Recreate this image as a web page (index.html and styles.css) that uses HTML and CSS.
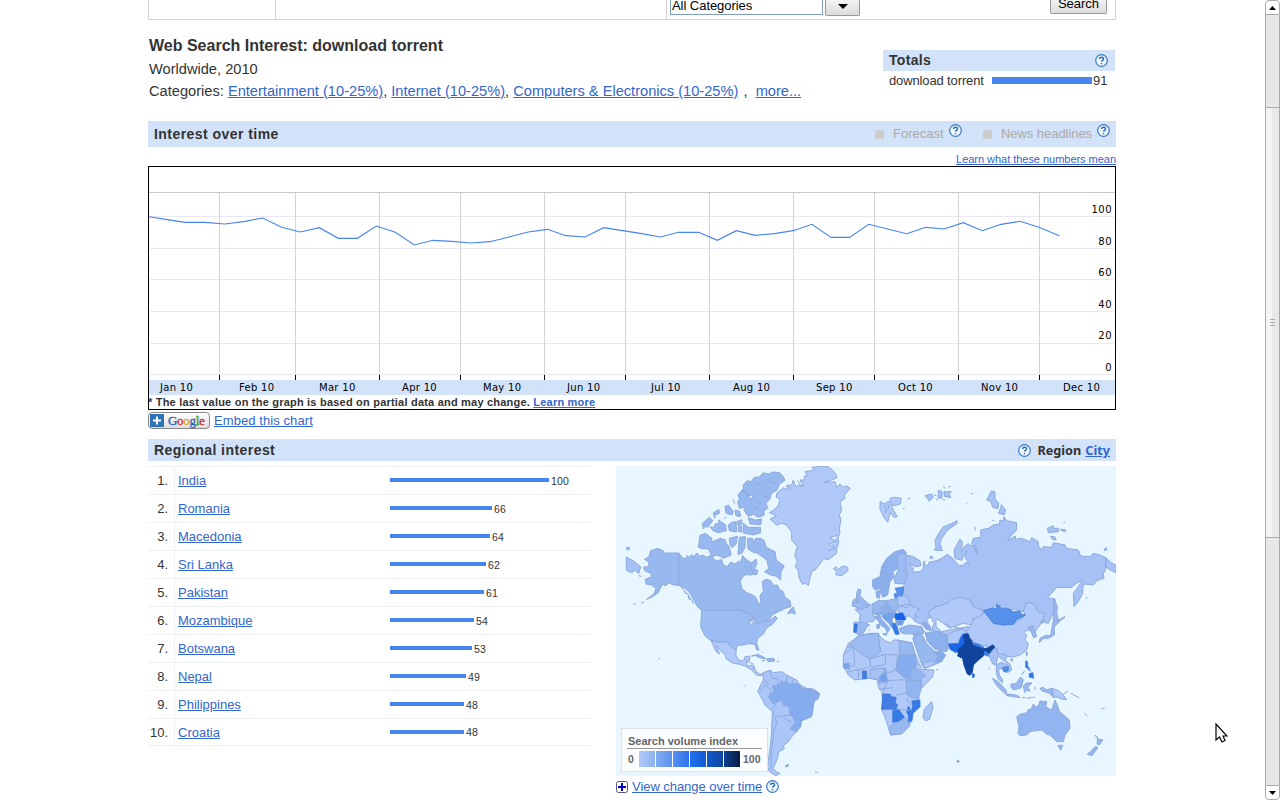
FILE: index.html
```html
<!DOCTYPE html>
<html lang="en">
<head>
<meta charset="utf-8">
<title>Web Search Interest: download torrent</title>
<link rel="stylesheet" href="styles.css">
</head>
<body>
<svg width="0" height="0" class="defs">
  <symbol id="help" viewBox="0 0 13 13"><circle cx="6.5" cy="6.5" r="5.8" fill="#f0f8ff" stroke="#3679c3" stroke-width="1.2"/><path d="M4.6 5.1c0-2.5 4-2.4 3.9-.1C8.500 6.300 6.500 6.300 6.500 7.800M6.500 8.900v1.300" fill="none" stroke="#2a6dbb" stroke-width="1.500"/></symbol>
</svg>
<div class="window">
<main class="content">
  <div class="filters">
    <div class="f1"></div><div class="f2"></div>
    <div class="f3"><span class="combo">All Categories</span><span class="btn drop"><svg width="10" height="5"><path d="M0 0h10L5 5z"/></svg></span><span class="btn search">Search</span></div>
  </div>
  <header class="head">
    <div class="summary">
      <h1>Web Search Interest: download torrent</h1>
      <p class="where">Worldwide, 2010</p>
      <p class="cats"><span>Categories:</span> <a class="c1">Entertainment (10-25%)</a>, <a class="c2">Internet (10-25%)</a>, <a class="c3">Computers &amp; Electronics (10-25%)</a> <span class="comma">,</span> <a class="c4">more...</a></p>
    </div>
    <div class="totals">
      <div class="bar"><h2>Totals</h2><svg class="q"><use href="#help"/></svg></div>
      <div class="total"><span class="term">download torrent</span><i></i><b>91</b></div>
    </div>
  </header>
  <div class="bar time"><h2>Interest over time</h2>
    <span class="check"></span><span class="opt forecast">Forecast</span><svg class="q up"><use href="#help"/></svg>
    <span class="check second"></span><span class="opt news">News headlines</span><svg class="q up"><use href="#help"/></svg>
  </div>
  <div class="learn"><a>Learn what these numbers mean</a></div>
  <section class="chart">
    <svg width="966" height="228" viewBox="149 167 966 228">
      <path d="M149 380h966v15h-966z" fill="#d1e2f9"/>
      <path d="M150 216.500h964M150 248.500h964M150 279.500h964M150 311.500h964M150 343.500h964M150 374.500h964" stroke="#e8e8f4"/>
      <path d="M219.500 193v183M295.500 193v183M379.500 193v183M460.500 193v183M544.500 193v183M625.500 193v183M709.500 193v183M793.500 193v183M874.500 193v183M958.500 193v183M1039.500 193v183" stroke="#d3d7d3"/>
      <path d="M149 192.500h966" stroke="#c8c8c8"/>
      <path d="M219.500 375v5M295.500 375v5M379.500 375v5M460.500 375v5M544.500 375v5M625.500 375v5M709.500 375v5M793.500 375v5M874.500 375v5M958.500 375v5M1039.500 375v5" stroke="#000"/>
      <polyline transform="translate(140 160) scale(.33333)" fill="none" stroke="#4684ee" stroke-width="3.300" points="25,170 82,179 135,187 195,187 255,192 315,184 368,174 425,202 481,216 538,203 595,235 652,235 709,198 766,217 823,255 879,241 935,244 992,249 1050,245 1107,231 1165,216 1222,208 1278,227 1335,231 1391,203 1448,212 1505,221 1561,231 1615,217 1676,217 1732,241 1789,212 1846,226 1903,221 1960,212 2016,193 2073,232 2129,232 2186,193 2243,207 2300,221 2357,202 2413,207 2470,188 2527,212 2583,193 2640,184 2697,202 2758,227"/>
      <g class="axis">
        <text x="160" y="391">Jan 10</text><text x="239" y="391">Feb 10</text><text x="319" y="391">Mar 10</text><text x="402" y="391">Apr 10</text><text x="483" y="391">May 10</text><text x="567" y="391">Jun 10</text><text x="651" y="391">Jul 10</text><text x="733" y="391">Aug 10</text><text x="816" y="391">Sep 10</text><text x="898" y="391">Oct 10</text><text x="981" y="391">Nov 10</text><text x="1063" y="391">Dec 10</text>
      </g>
      <g class="axis scale">
        <text x="1112" y="213">100</text><text x="1112" y="245">80</text><text x="1112" y="276">60</text><text x="1112" y="308">40</text><text x="1112" y="339">20</text><text x="1112" y="371">0</text>
      </g>
    </svg>
    <p>* The last value on the graph is based on partial data and may change. <a>Learn more</a></p>
  </section>
  <div class="embed">
    <span class="gadget"><svg width="14" height="13" viewBox="0 0 14 13"><path d="M0 0h14v13H0z" fill="#3073b3"/><path d="M7 2.500v8M3 6.500h8" stroke="#fff" stroke-width="2"/></svg><span class="google"><i class="g1">G</i><i class="g2">o</i><i class="g3">o</i><i class="g1">g</i><i class="g4">l</i><i class="g2">e</i></span></span>
    <a>Embed this chart</a>
  </div>
  <div class="bar region"><h2>Regional interest</h2><svg class="q"><use href="#help"/></svg><b>Region</b><a>City</a></div>
  <div class="cols">
    <ol class="list">
      <li><span class="n">1.</span><span class="name"><a>India</a></span><i style="width:159px"></i><em>100</em></li>
      <li><span class="n">2.</span><span class="name"><a>Romania</a></span><i style="width:102px"></i><em>66</em></li>
      <li><span class="n">3.</span><span class="name"><a>Macedonia</a></span><i style="width:100px"></i><em>64</em></li>
      <li><span class="n">4.</span><span class="name"><a>Sri Lanka</a></span><i style="width:96px"></i><em>62</em></li>
      <li><span class="n">5.</span><span class="name"><a>Pakistan</a></span><i style="width:94px"></i><em>61</em></li>
      <li><span class="n">6.</span><span class="name"><a>Mozambique</a></span><i style="width:84px"></i><em>54</em></li>
      <li><span class="n">7.</span><span class="name"><a>Botswana</a></span><i style="width:82px"></i><em>53</em></li>
      <li><span class="n">8.</span><span class="name"><a>Nepal</a></span><i style="width:76px"></i><em>49</em></li>
      <li><span class="n">9.</span><span class="name"><a>Philippines</a></span><i style="width:74px"></i><em>48</em></li>
      <li><span class="n">10.</span><span class="name"><a>Croatia</a></span><i style="width:74px"></i><em>48</em></li>
    </ol>
    <div class="right">
      <div class="map">
      <svg width="500" height="310" viewBox="18 18 1500 930" class="land">
        <!-- North America -->
        <g fill="#98b8f0">
          <path d="M206 279L218 293 226 297 232 286 237 293 245 284 250 290 262 279 268 289 280 285 288 292 302 287 318 302 335 299 340 315 352 320 362 306 375 312 387 303 392 308 398 287 412 301 425 308 438 297 441 311 434 325 426 345 408 344 398 350 391 365 395 385 410 398 428 405 438 412 445 433 452 425 450 405 460 395 457 365 468 358 482 362 490 376 502 375 508 388 520 395 524 410 540 422 543 440 515 448 490 462 475 480 470 485 445 490 430 470 415 460 390 451 275 451 262 440 252 422 240 400 225 385 206 376z"/>
          <path d="M212 376l8 14M222 390l4 10 8 2M234 402l2 14 9 4M246 420l4 12M405 318l12 14M420 312l6 18M494 462l12-10 14-2M462 490l24-14"/>
          <path d="M400 75L412 62 423 65 433 52 448 51 460 38 475 42 490 36 508 38 518 47 525 61 508 73 501 91 485 99 479 118 468 130 473 145 462 152 462 166 445 172 430 163 415 169 402 152 407 142 388 145 383 125 388 118 384 105 398 88 411 99 423 119 430 104 414 107 400 95z"/>
          <path d="M436 70l14 6M470 60l16 10 14-2M440 120l14 12M460 108l14 2M430 140l14 8"/>
          <path d="M415 173l22 7 18-3 -3 17-32-2zM400 190l15 12 36 0 1 16-22 7-30-6zM345 140l10-5 15 20-4 10-18-5zM375 150l14 4 3 15-14-1zM355 195l9-8 14-2 2 31-22-4zM277 190l21-18 11 10-17 20-8-3-4 8zM300 200l10 3 8-14 8 5 0-14 21 15 2 17-24 6-16-6zM310 158l17-9 1 11-13 5-1 10zM380 185l15-6 1 14-11 4zM385 200l10-2 1 18-10-1zM370 118l4 13M350 170l-8 8"/>
          <path d="M265 262l5-36 16-6 20 15-4 12 12-5 18-7 14 5 3 11 9 9 5 25-22 10-20-10-15 5-10-22-11-2-9 0zM358 235l24-6-3 22-12 12-7-9zM388 232l18-2-1 32-9 17-12 5 2-30z"/>
          <path d="M412 235l15 0 4 15 5-15 15 0 11 6 7 21 26 13 4 25 24 18-10 17-1 25-14-12-17-3-17-10 12-9-5-25-29-22-10-1-18-11zM432 328l12 3-4 13-14-2zM540 450l10-9 6 22-10-5-13 3z"/>
        </g>
        <path fill="#98b8f0" d="M103 298L117 290 122 272 143 265 160 272 163 279 206 279V376L190 375 178 369 165 378 158 371 145 398 125 412 109 418 132 402 138 385 125 375 108 372 105 358 125 350 122 340 105 333 100 322 118 318 115 305z"/>
        <path fill="#a5c1f5" d="M49 291L72 304 92 320 86 341 75 331 65 338 49 331zM50 262h8v7h-8zM85 347l10 2M93 430l10-4M70 432l8 1"/>
        <path fill="#9cbcf3" d="M275 451H390L415 460 428 468 425 485 418 475 420 494 430 490 429 473 440 475 440 492 458 485 480 482 495 468 502 475 490 490 470 505 466 510 462 520 443 535 440 550 447 570 440 570 435 553 416 551 400 555 382 556 378 572 365 560 352 546 320 546 300 540 285 528 272 500z"/>
        <path fill="#b0c9f8" d="M478 158L490 151 505 137 510 118 499 112 500 100 520 83 532 90 530 76 545 75 550 60 557 79 570 75 580 78 570 60 583 60 583 48 593 49 585 35 615 30 605 22 650 18 665 28 675 38 682 52 670 58 640 68 675 65 680 82 690 72 700 82 710 78 721 85 703 105 704 116 690 125 695 150 688 165 693 180 688 205 690 220 684 231 686 250 680 265 680 280 655 299 640 296 635 305 615 330 605 335 600 355 595 376 583 369 578 374 567 353 564 330 556 320 562 305 554 285 562 260 545 240 545 217 530 195 515 190 500 195 480 177 500 168zM683 226l-25 8 22 9-24 9 20 11-22 10M574 82l-11-21M534 78l13 12"/>
        <path fill="#b0c9f8" d="M670 326l8-6 8 8 9-9 15 0 5 12-20 16-18-3 3-10z"/>
        <g transform="translate(0 480)">
          <path fill="#b0c9f8" d="M303 61L320 66H352L365 82 378 90 378 108 388 122 403 120 405 110 420 108 418 122 410 128 412 138 430 135 437 153 450 163 460 160 458 167 440 166 425 150 405 138 390 133 370 130 350 118 345 105 325 85 317 75 329 102 318 95zM408 122l22 10M427 147l8-8"/>
          <path fill="#98b8f0" d="M425 108l18-5 18 8 8 6-17-3-15-7zM472 116l20-1 2 8-20 2zM455 122h10M500 124h7M455 94l5 5M145 118l5-4M403 196v3"/>
          <path fill="#aac5f7" d="M460 158L480 150 490 158 515 155 530 165 560 180 568 193 590 205 610 207 628 220 625 235 612 245 608 275 603 290 575 302 572 320 560 335 550 345 545 350 535 365 520 378 523 387 509 393 505 400 503 415 495 432 490 445 498 455 510 460 498 467 478 455 472 440 478 400 484 350 487 275 465 255 450 225 443 215 452 195 460 180z"/>
          <path fill="#84acee" d="M490 205L486 198 510 193 512 182 522 188 530 180 534 192 560 190 568 193 575 205 600 207 628 220 625 235 612 245 605 290 575 302 570 320 557 335 540 327 555 308 548 290 540 285 537 260 520 255 515 240 490 252 475 232 480 220 492 215z"/>
          <path fill="none" d="M480 152l5 22 18 3 0 15M460 175l15 20M530 165v25M550 178l-4 12M450 215l15-20 21 17M487 270l10-18M487 275l8 15 5 20-8 20-9 80 0 38M497 290l43-5M520 292l25 15"/>
          <path d="M527 437l10-3-8 7zM615 454l8 5"/>
        </g>
        <!-- Europe and Asia -->
        <g transform="translate(750 0)">
          <path fill="#a5c1f5" d="M138 285L160 290 180 302 182 318 165 320 145 308 160 325 158 336 180 335 190 325 190 305 200 320 208 306 222 304 240 298 262 283 275 292 298 318 308 315 320 307 328 310 316 295 319 270 310 292 305 301 285 295 282 270 300 237 307 245 305 275 313 260 325 250 333 258 347 257 353 285 346 270 335 250 340 235 362 232 362 210 385 205 400 195 419 192 420 180 430 183 432 170 440 182 470 188 470 210 455 225 442 243 466 228 467 238 485 235 510 245 515 233 535 245 535 257 545 270 550 260 575 262 580 248 615 255 620 265 655 270 662 288 690 290 700 280 720 285 737 293 737 330 730 340 732 355 710 362 700 375 672 372 668 385 668 400 655 425 642 440 640 400 655 380 668 360 650 370 635 382 590 383 562 413 585 417 585 450 575 470 565 490 545 485 553 460 535 455 520 430 500 428 490 455 470 450 440 445 425 437 410 435 395 445 370 452 340 440 330 420 300 412 280 420 262 430 230 440 205 455 215 470 200 478 207 500 190 495 165 485 150 465 178 450 150 435 140 410 130 400 130 380 142 350 137 310zM737 293l14 13 17 10v22l-12-5-19-12z"/>
          <path fill="#b0c9f8" d="M205 455L230 440 262 430 275 418 300 412 330 420 340 440 370 452 365 470 340 475 335 495 310 490 280 500 270 505 250 490 228 475 228 500 245 515 285 507 325 500 322 525 300 530 265 550 262 525 235 515 215 510 222 490 215 475zM270 500l-15-10M280 500l30 8-15 10 20 2"/>
          <path fill="#b0c9f8" d="M365 465L370 455 385 470 400 490 430 495 460 493 497 465 490 455 500 428 520 430 535 455 553 460 550 478 540 495 525 515 505 510 490 515 500 525 495 540 505 550 500 570 480 585 455 592 440 588 430 585 410 580 400 560 375 558 345 550 325 525 320 515 330 500 340 480z"/>
          <path class="hot" fill="#5590ea" d="M370 452L395 445 410 444 410 433 425 443 450 448 460 455 480 453 485 462 497 465 470 480 460 493 430 495 400 490 385 470z"/>
          <path fill="#a5c1f5" d="M222 270L228 262 225 242 235 222 248 202 285 186 290 181 292 190 263 210 245 235 240 250 247 272zM380 120l14-27 11 3 0 20 11 14-2 16-16-4-6-18zM415 160l7-15 2-11 13 16-4 14zM562 205l17-8 2 8 14 0 0 10-30 3zM600 208l18 2-4 6zM572 230l12 0 5 10-12-2zM732 268l7-5 2 7-8 1zM190 310l7-8M210 290h8v5h-8zM345 200v12M397 181h6M322 130v2M332 101h7M610 187h5"/>
          <path fill="#b0c9f8" d="M60 125L75 132 85 123 93 130 90 115 104 112 124 115 120 132 103 137 93 133 100 150 112 170 102 172 90 158 83 187 72 172 60 148zM72 135l8 12-4 12M84 132l4 16M142 117l9-2M129 146h5"/>
          <path fill="#a5c1f5" d="M195 107l20-5 5 10-12 10zM235 90l12 5-2 20-10-2zM252 95l22 0-6 8 5 10-20-4zM250 78l5 8M265 80h7M228 120l8-4M222 104l8 4M248 118l8 3M205 122l5 2"/>
          <path fill="#8cb0ee" d="M37 360L60 350 65 320 80 295 105 275 130 268 140 280 125 285 110 290 115 325 98 335 103 350 90 365 83 405 68 412 62 385 45 390 38 380zM65 350l15-45 30-18M65 350v45M48 395l15-5-5 25-8-3z"/>
          <path fill="#9cbcf3" d="M110 290L125 280 138 285 135 330 142 350 130 372 105 370 102 355 115 330z"/>
          <path class="hot" fill="#5590ea" d="M105 385l25-4-1 24-8 17-14-2-5-18 10-4z"/>
          <path fill="#b0c9f8" d="M112 410l28-3 12 28-10 8-30-8zM113 440l30-8 35 16-15 17 10 5-15 5-12-8-12 6-18-18z"/>
          <path fill="#98b8f0" d="M37 432l20-11 18 2 37-8 2 25-8 18-30 8-36-4z"/>
          <path fill="#8cb0ee" d="M75 420v22l35 14M45 462l15-8 5-12 20 5 20 13 0 15-35-3-5-12z"/>
          <path fill="#aac5f7" d="M-15 448L3 445 22 430 40 438 37 460 45 475 40 485 25 485 15 495-2 488 0 463z"/>
          <path fill="#98b8f0" d="M-18 486L12 487 29 495 20 502 10 520-5 525-18 515zM-10 400l5-13 8 3-3 17 22 22 3 12-30 8-6-8 8-4-8-13zM-23 425l7-9 9 3-4 22-12-3zM10 375h2"/>
          <path class="hot" fill="#347bea" d="M-17 492h9l-3 25h-8z"/>
          <path fill="#8cb0ee" d="M40 472L58 465 65 478 82 497 90 507 82 518 76 505 62 495 54 480zM50 495l8-4 0 14-7 0zM68 522l13-3-2 8zM26 510h5"/>
          <path fill="#73a2ed" d="M65 468l20-12 20 3 0 20 7 25-18-2-8-13-15-13z"/>
          <path class="hot" fill="#347bea" d="M98 490l10 3 4 10 6 19-11 2-8-18z"/>
          <path class="hot" fill="#1563e8" d="M105 461l23-3 10 19-8 6-25-4z"/>
          <path fill="#73a2ed" d="M108 482h24l-5 13-18 1z"/><path fill="#f8f8cf" stroke="none" d="M98 475h8v13h-8z"/>
          <path fill="#98b8f0" d="M118 505l30-10 38 5 6 20-32 2-30-1-8-5zM185 488l22 9 5 12-16-3zM160 522l25-3 0 20-22 8zM582 415l10 25-2 20 5 20 20-10-18 15-10 0-7 20 0-40zM543 483l10-3-8 12zM680 412v5M605 478l10-8"/>
        </g>
        <g transform="translate(750 480)">
          <path fill="#8cb0ee" d="M195 40L215 35 235 35 262 45 265 85 260 95 225 88 203 65zM190 5l20 12 3 14-14-2z"/>
          <path fill="#98b8f0" d="M158 55L185 42 200 70 220 90 225 100 235 95 257 105 245 125 195 145 188 140 175 105z"/>
          <path fill="#b0c9f8" d="M188 130l30-8 7 10-29 13zM262 45l13-8 33-10 13 10-19 18-14 15-24 2z"/>
          <path fill="#84acee" d="M222 94l15 2 5-6 15 16-17 20-14-2 8-15z"/>
          <path class="hot" fill="#1a65e8" d="M265 72L295 70 302 52 308 42 322 40 328 52 312 78 297 92 300 98 285 97 270 88z"/>
          <path class="hot" fill="#3b80e8" d="M340 68l15 4 17 10-2 7-30-10zM372 90l12 5 2 14-14-5z"/>
          <path fill="#10439b" stroke="#10439b" d="M310 46L325 42 327 54 335 60 338 75 370 87 385 83 398 75 404 80 398 92 390 103 378 92 370 93 371 107 355 120 340 135 337 155 330 166 322 162 312 135 308 115 293 108 297 94 293 90 304 80 315 70z"/>
          <path class="hot" fill="#1563e8" d="M336 158l8 6-2 9-5-1z"/>
          <path fill="#a5c1f5" d="M387 105L400 88 410 84 412 98 420 110 430 100 442 108 436 120 450 133 455 150 443 158 430 154 425 145 415 148 418 165 427 178 428 188 415 178 409 160 409 135 398 132zM413 110l-5 25 15-8 22 10M388 143v6M450 119l8-2-1 7z"/>
          <path class="hot" fill="#5590ea" d="M428 142l17-2 0 12-12 4z"/>
          <path class="hot" fill="#347be8" d="M497 122l6 3 0 12 8 12-14-7zM508 160l11-2 2 17-14-4zM502 148l12 7M485 165l9-13"/>
          <path fill="#98b8f0" d="M397 175L412 183 425 195 440 213 438 222 425 212 410 197zM438 222l18 1 18 4 6 6-40-6zM453 192l15-1 14-20 8 8-7 25-22 6-8-8zM490 198l9-9 17 0-13 11 7 14-10-3-6 7zM486 233l10 0M500 235l24-4M525 200v10M540 205l9-3 12 8 14-6 5 28-12-12-23-8z"/>
          <path fill="#b0c9f8" d="M577 205l18 7 15 13 10 14-15-2-13-6-12 1zM610 222l14-8M633 220l25 14M673 279l9 10M724 268l10-6M498 95l5 3-3 10z"/>
          <path fill="#98b8f0" d="M540 55l18-10 13 3 4-18 3-22 15-8 5 6-15 14 0 25-18 10-14 0-13 13zM505 22l15-5 3 12 7 20-9 5-7-17z"/>
          <path fill="#92b4f0" d="M470 290L480 283 500 278 505 268 513 268 520 252 527 260 535 258 540 243 560 245 557 260 575 270 585 240 592 255 598 274 628 300 630 325 615 345 610 365 590 365 575 350 568 345 560 343 545 330 520 333 510 335 500 345 480 347 474 340 477 320zM594 376l14 0-6 15zM705 345l10 13 14 2-12 15-6-3 2-17zM682 403l26-25 5 6-17 23z"/>
          <!-- Africa -->
          <path fill="#b0c9f8" d="M-5 47L30 40 55 40 60 50 75 62 95 70 100 60 115 60 155 68 165 100 185 148 222 150 218 170 180 210 175 225 180 260 160 280 155 305 140 320 125 340 92 345 78 300 65 268 68 240 65 215 55 200 52 180 30 175 0 178-15 180-35 165-50 140-50 105-35 70-20 60z"/>
          <path fill="#9cbcf3" d="M-4 47L55 40 57 62 62 95 30 117 8 104-20 82-35 80-15 60z"/>
          <path fill="#98b8f0" d="M117 62l38 8 10 36h-47z"/>
          <path fill="#84acee" d="M118 106h47l6 30-15 20-5 25-22-10-22-22z"/>
          <path fill="#92b4f0" d="M156 140l25 12 15 15-20 15-25-2zM138 182l48 0-4 28-7 28-20-5-15-10z"/>
          <path fill="#a5c1f5" d="M30 148l48-4 3 38-22 10-8-15-21-2z"/>
          <path fill="#73a2ed" d="M72 145l6 12 5 30-25-3 0-14 14-12zM-50 130l18 0 0 18-18-5z"/>
          <path fill="#98b8f0" d="M90 318l22-13 25-13 13 25-25 25-33 3-4-15z"/>
          <path class="hot" fill="#447ee4" d="M7 153l12 0 2 22-13 2zM68 222l22 0 5 8 13 2-2 17 7 5-5 14-43 0z"/>
          <path class="hot" fill="#347be8" d="M98 272l18-4 17 23-17 13-18 3zM145 258l10 15 3-17-3-13 25-3 0 20-22 19-2 22-10 6-1-20-5-10z"/>
          <path fill="none" d="M62 95l-7-35M-50 105l30-25M-20 82l5 55-30 0M30 117l2 20-22 10-32 5-15 5M30 117l45-14 2 30-45 10M75 103l38 2-5 45-28 10M80 182l58-3M108 225l45-8M118 270l37 0M55 208l45-5M-5 150v25M80 182l-10 38M140 235l12 20M165 45l20-18 14 12"/>
          <path fill="#aac5f7" d="M215 245l4 18-10 35-12 5-8-11 4-25z"/>
          <path d="M228 150l7-2M291 420l7 4-5 3z"/>
        </g>
      </svg>
      <div class="legend"><h3>Search volume index</h3><div class="ramp"><b>0</b><i class="r1"></i><i class="r2"></i><i class="r3"></i><i class="r4"></i><i class="r5"></i><i class="r6"></i><b class="max">100</b></div></div>
      </div>
      <div class="view"><svg width="12" height="12"><rect x=".5" y=".5" width="11" height="11" rx="2" fill="#fff" stroke="#555577"/><path d="M6 2v8M2 6h8" stroke="#0000c4" stroke-width="2"/></svg><a>View change over time</a><svg class="q"><use href="#help"/></svg></div>
    </div>
  </div>
</main>
<aside class="scroll"><span class="arrow"><svg width="7" height="4"><path d="M0 4L3.500 0 7 4z"/></svg></span><span class="track"><span class="thumb"><i></i><i></i><i></i></span></span><span class="arrow down"><svg width="7" height="4"><path d="M0 0L3.500 4 7 0z"/></svg></span></aside>
</div>
<svg class="cursor" width="13" height="21" viewBox="0 0 13 21"><path d="M1 1v16l3.500-3 2.500 5 3-1.500-2-4.500h4z" fill="#fff" stroke="#000" stroke-width="1.200"/></svg>
</body>
</html>
```
FILE: styles.css
```css
* { box-sizing: border-box; }
body { margin: 0; height: 800px; overflow: hidden; background: #fff; color: #333; font: 13px/16px "Liberation Sans", Arial, sans-serif; }
h1, h2, h3, p, ol { margin: 0; padding: 0; }
i, em { font-style: normal; }
a { color: #3366cc; text-decoration: underline; text-underline-offset: 1px; }
.defs { position: absolute; }
.window { display: flex; justify-content: space-between; height: 800px; }
.content { width: 968px; margin-left: 148px; }
.filters { display: flex; height: 20px; border: 1px solid #d5d5d5; border-top: 0; }
.f1 { width: 127px; border-right: 1px solid #d5d5d5; }
.f2 { width: 391px; border-right: 1px solid #d5d5d5; }
.f3 { flex: 1; display: flex; align-items: flex-start; padding: 0 8px 0 3px; color: #000; }
.combo { width: 153px; height: 15px; border: 1px solid #7f9db9; border-top: 0; padding-left: 1px; line-height: 11px; letter-spacing: -.05px; }
.btn { background: linear-gradient(#f3f3f3, #dcdcdc); border: 1px solid #999; border-top: 0; border-radius: 0 0 2px 2px; }
.drop { width: 35px; height: 16px; margin-left: 2px; display: flex; justify-content: center; align-items: flex-start; padding-top: 4px; }
.search { width: 57px; height: 14px; margin-left: auto; text-align: center; line-height: 8px; }
.head { display: flex; justify-content: space-between; height: 101px; padding: 0 1px; }
.summary { padding-top: 14px; font-size: 14.630px; line-height: 22px; }
h1 { font-size: 16px; line-height: 24px; }
.where { line-height: 22px; }
.cats { white-space: nowrap; }
.comma { margin: 0 4px 0 1px; }
.totals { width: 232px; padding-top: 30px; }
.bar { display: flex; align-items: center; background: #d1e2f9; padding: 0 6px; }
h2 { font-size: 14px; line-height: 20px; letter-spacing: .45px; }
.q { width: 13px; height: 13px; flex: none; }
.totals .bar { height: 21px; justify-content: space-between; padding-right: 7px; }
.totals h2 { margin-top: -2px; letter-spacing: .3px; }
.total { display: flex; align-items: center; height: 21px; padding-left: 6px; }
.term { width: 103px; letter-spacing: -.13px; margin-top: -1px; }
.total i { width: 100px; height: 7px; background: #4684ee; margin-top: -2px; }
.total b { font-weight: normal; margin-left: 1px; margin-top: -1px; }
.time { height: 26px; }
.time h2 { flex: 1; }
.check { width: 9px; height: 9px; border-radius: 2px; background: #ccc; }
.opt { color: #aaa; }
.forecast { width: 51px; margin: 0 5px 0 9px; }
.second { margin-left: 21px; }
.news { width: 91px; margin: 0 5px 0 9px; white-space: nowrap; letter-spacing: -.05px; }
.up { margin-top: -7px; }
.learn { height: 19px; text-align: right; font-size: 11px; line-height: 25px; letter-spacing: -.03px; }
.chart { height: 244px; border: 1px solid #000; }
.chart svg { display: block; }
.chart p { font-size: 11px; font-weight: bold; line-height: 14px; letter-spacing: .21px; margin-left: -1px; }
.axis { font: 10px "DejaVu Sans", sans-serif; letter-spacing: .3px; fill: #000; }
.scale { text-anchor: end; letter-spacing: .5px; }
.embed { height: 29px; display: flex; align-items: flex-start; padding-top: 2px; letter-spacing: .08px; line-height: 17px; }
.gadget { display: flex; align-items: center; width: 62px; height: 17px; border: 1px solid #888; border-radius: 4px; background: linear-gradient(#fff, #ddd); margin-right: 4px; padding-left: 1px; }
.google { font: 13px/14px "Liberation Serif", serif; letter-spacing: -.3px; margin-left: 4px; -webkit-text-stroke: .3px; }
.g1 { color: #2861bb; } .g2 { color: #d32f2f; } .g3 { color: #d9a51b; } .g4 { color: #239b3a; }
.region { height: 22px; }
.region h2 { flex: 1; }
.region b, .region a { font: bold 12.700px/20px "Noto Sans", sans-serif; margin-left: 6px; }
.region a { margin-left: 4px; }
.cols { display: flex; justify-content: space-between; padding-top: 5px; }
.list { width: 442px; list-style: none; border-top: 1px solid #edf0f7; }
.list li { height: 28px; display: flex; align-items: center; border-bottom: 1px solid #edf0f7; }
.list li:last-child { height: 27px; }
.n { width: 27px; align-self: stretch; text-align: right; padding-right: 6px; border-right: 1px solid #edf0f7; line-height: 27px; }
.name { width: 215px; padding-left: 3px; line-height: 27px; }
.list i { height: 4px; background: #4684ee; margin-top: -1px; }
.list em { font-size: 10.500px; margin-left: 2px; letter-spacing: .1px; }
.right { width: 500px; }
.map { position: relative; height: 310px; background: #e8f6ff; }
.land { display: block; stroke: #8eaadd; stroke-width: 3; stroke-linejoin: round; }
.hot { stroke: #3774d5; stroke-width: 2; }
.legend { position: absolute; left: 5px; top: 262px; width: 147px; height: 44px; background: #fbfdfe; border: 1px solid #dce3e6; padding: 6px 5px 0; color: #666; }
.legend h3 { font-size: 11px; line-height: 13px; height: 14px; border-bottom: 1px solid #999; padding-left: 1px; }
.ramp { display: flex; align-items: center; gap: 1px; padding-top: 2px; font-size: 10.500px; }
.ramp b { width: 11px; padding-left: 1px; }
.ramp i { width: 16px; height: 16px; }
.ramp .max { padding-left: 2px; }
.r1 { background: linear-gradient(90deg, #b0c9f8, #8db3f1); }
.r2 { background: linear-gradient(90deg, #83acef, #5c94ee); }
.r3 { background: linear-gradient(90deg, #5890ef, #2c72ed); }
.r4 { background: linear-gradient(90deg, #2270f0, #135bd2); }
.r5 { background: linear-gradient(90deg, #1159cb, #10459f); }
.r6 { background: linear-gradient(90deg, #103f93, #081c43); }
.view { display: flex; align-items: center; height: 22px; letter-spacing: -.05px; }
.view svg:first-child { margin-top: -1px; }
.view a { margin: 0 4px; }
.view .q { margin-top: -2px; }
.scroll { width: 15px; display: flex; flex-direction: column; }
.arrow { height: 15px; border: 1px solid #aaa; border-radius: 4px 4px 0 0; display: flex; align-items: center; justify-content: center; }
.down { border-radius: 0 0 4px 4px; }
.track { flex: 1; background: #e8e7e6; border: solid #aaa; border-width: 0 1px; padding-top: 92px; }
.thumb { display: flex; flex-direction: column; gap: 2px; align-items: center; justify-content: center; height: 431px; border: solid #aaa; border-width: 1px 0; background: linear-gradient(90deg, #f5f4f3 50%, #e9e8e7 50%); }
.thumb i { width: 5px; height: 1px; background: #aaa; }
.cursor { position: absolute; left: 1215px; top: 723px; }
```
